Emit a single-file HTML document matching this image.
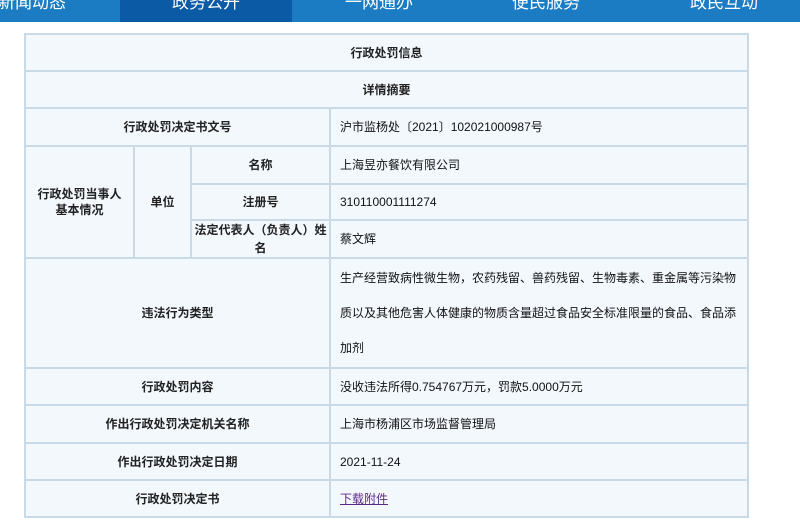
<!DOCTYPE html>
<html><head><meta charset="utf-8"><style>
*{margin:0;padding:0;box-sizing:border-box}
body{width:800px;height:523px;background:#fff;position:relative;overflow:hidden;font-family:"Liberation Sans","Noto Sans CJK SC",sans-serif}
.nav{position:absolute;left:0;top:0;width:800px;height:22px;background:#1b7cc3}
.nav .act{position:absolute;left:120px;top:0;width:172px;height:22px;background:#0a5aa6}
.nav span{position:absolute;top:-9px;color:#fff;font-size:17px;line-height:24px;white-space:nowrap}
.tb{position:absolute;left:24px;top:33px;width:725px;height:485px;background:#c9dae6}
.c{position:absolute;background:#f3f8fd;color:#222;font-size:12px;display:flex;align-items:center;justify-content:center;text-align:center;line-height:16px;font-weight:bold}
.v{justify-content:flex-start;text-align:left;padding-left:9px;font-weight:normal;color:#111}
a{color:#5b2a86;text-decoration:underline}
</style></head><body>
<div class="nav"><div class="act"></div>
<span style="left:-2px">新闻动态</span><span style="left:172px">政务公开</span><span style="left:345px">一网通办</span><span style="left:512px">便民服务</span><span style="left:690px">政民互动</span></div>
<div class="tb"></div>
<div class="c" style="left:26px;top:35px;width:721px;height:35px">行政处罚信息</div>
<div class="c" style="left:26px;top:72px;width:721px;height:35px">详情摘要</div>
<div class="c" style="left:26px;top:109px;width:303px;height:36px">行政处罚决定书文号</div>
<div class="c v" style="left:331px;top:109px;width:416px;height:36px">沪市监杨处〔2021〕102021000987号</div>
<div class="c" style="left:26px;top:147px;width:107px;height:110px">行政处罚当事人<br>基本情况</div>
<div class="c" style="left:135px;top:147px;width:55px;height:110px">单位</div>
<div class="c" style="left:192px;top:147px;width:137px;height:36px">名称</div>
<div class="c v" style="left:331px;top:147px;width:416px;height:36px">上海昱亦餐饮有限公司</div>
<div class="c" style="left:192px;top:185px;width:137px;height:34px">注册号</div>
<div class="c v" style="left:331px;top:185px;width:416px;height:34px">310110001111274</div>
<div class="c" style="left:192px;top:221px;width:137px;height:36px;line-height:18px">法定代表人（负责人）姓名</div>
<div class="c v" style="left:331px;top:221px;width:416px;height:36px">蔡文辉</div>
<div class="c" style="left:26px;top:259px;width:303px;height:108px">违法行为类型</div>
<div class="c v" style="left:331px;top:259px;width:416px;height:108px;line-height:35px;padding-right:4px">生产经营致病性微生物，农药残留、兽药残留、生物毒素、重金属等污染物质以及其他危害人体健康的物质含量超过食品安全标准限量的食品、食品添加剂</div>
<div class="c" style="left:26px;top:369px;width:303px;height:35px">行政处罚内容</div>
<div class="c v" style="left:331px;top:369px;width:416px;height:35px">没收违法所得0.754767万元，罚款5.0000万元</div>
<div class="c" style="left:26px;top:406px;width:303px;height:36px">作出行政处罚决定机关名称</div>
<div class="c v" style="left:331px;top:406px;width:416px;height:36px">上海市杨浦区市场监督管理局</div>
<div class="c" style="left:26px;top:444px;width:303px;height:35px">作出行政处罚决定日期</div>
<div class="c v" style="left:331px;top:444px;width:416px;height:35px">2021-11-24</div>
<div class="c" style="left:26px;top:481px;width:303px;height:35px">行政处罚决定书</div>
<div class="c v" style="left:331px;top:481px;width:416px;height:35px"><a>下载附件</a></div>
</body></html>
